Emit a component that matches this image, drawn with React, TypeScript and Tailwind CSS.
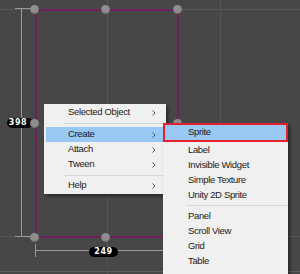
import React from "react";

const font = { fontFamily: '"Liberation Sans", Arial, sans-serif' };
const digits = { fontFamily: '"DejaVu Sans", sans-serif' };

const Chevron = () => (
  <svg width="4" height="6" viewBox="0 0 4 6" className="shrink-0">
    <polyline points="0.5,0.5 3,3 0.5,5.5" fill="none" stroke="#555" strokeWidth="1" />
  </svg>
);

// resize handle on the canvas, placed by its centre
const Handle = ({ x, y }: { x: number; y: number }) => (
  <div
    className="absolute w-[9px] h-[9px] rounded-full bg-[#8e8e8e] shadow-[inset_0_-1px_1px_rgba(0,0,0,0.25)]"
    style={{ left: x - 4.5, top: y - 4.5 }}
  />
);

const MenuRow = ({
  label,
  arrow,
  active,
}: {
  label: string;
  arrow?: boolean;
  active?: boolean;
}) => (
  <div
    className={`h-[15px] flex items-center pl-[22px] pr-[8px] mx-[2px] ${
      active ? "bg-[#98c8f3]" : ""
    }`}
  >
    <span className="flex-1 text-[9.5px] tracking-[-0.35px] text-[#1a1a1a]">{label}</span>
    {arrow && <Chevron />}
  </div>
);

const SubRow = ({ label }: { label: string }) => (
  <div className="h-[15.25px] flex items-center pl-[25px]">
    <span className="text-[9.5px] tracking-[-0.35px] text-[#1a1a1a]">{label}</span>
  </div>
);

const Sep = ({ h, left }: { h: string; left: string }) => (
  <div className={`${h} flex items-center ${left}`}>
    <div className="h-px w-full bg-[#d6d6d6]" />
  </div>
);

export default function App() {
  const handles = [
    [34, 9],
    [105, 9],
    [177, 9],
    [177, 123],
    [34, 237],
    [105, 237],
    [177, 237],
  ];

  return (
    <div className="relative w-[300px] h-[274px] overflow-hidden bg-[#474747]" style={font}>
      {/* grid */}
      <div className="absolute left-0 right-0 top-[9px] h-px bg-[#575757]" />
      <div className="absolute left-0 right-0 top-[236px] h-px bg-[#575757]" />
      <div className="absolute left-0 right-0 top-[271px] h-px bg-[#5e5e5e]" />
      <div className="absolute top-0 bottom-0 left-[107px] w-px bg-[#545454]" />
      <div className="absolute top-0 bottom-0 left-[220px] w-px bg-[#545454]" />

      {/* widget rect */}
      <div className="absolute left-[35px] top-[9px] w-[144px] h-[229px] border-2 border-[#6e1f5c]" />

      {/* left measure */}
      <div className="absolute left-[15px] top-[8px] w-[18px] h-[229px] flex">
        <div className="w-[6px] flex flex-col justify-between">
          <div className="h-px bg-[#9a9a9a]" />
          <div className="h-px bg-[#9a9a9a]" />
        </div>
        <div className="w-px bg-[#9a9a9a]" />
        <div className="flex-1 flex flex-col justify-between">
          <div className="h-px bg-[#9a9a9a]" />
          <div className="h-px bg-[#9a9a9a]" />
        </div>
      </div>

      {/* bottom measure */}
      <div className="absolute left-[35px] top-[244px] w-[143px] h-[13px] flex items-center">
        <div className="w-px h-full bg-[#9a9a9a]" />
        <div className="flex-1 h-px bg-[#9a9a9a]" />
      </div>

      {handles.map(([x, y]) => (
        <Handle key={`${x}-${y}`} x={x} y={y} />
      ))}

      {/* size labels */}
      <div className="absolute left-[7px] top-[118px] w-[26px] h-[10px] rounded-full bg-black flex items-center justify-center pr-[4px]">
        <span className="text-[8px] font-bold text-white leading-none tracking-[0.6px]" style={digits}>
          398
        </span>
      </div>
      <Handle x={34} y={123} />
      <div className="absolute left-[89px] top-[247px] w-[29px] h-[10px] rounded-full bg-black flex items-center justify-center">
        <span className="text-[8px] font-bold text-white leading-none tracking-[0.6px]" style={digits}>
          249
        </span>
      </div>

      {/* context menu */}
      <div className="absolute left-[44px] top-[104px] w-[122px] bg-[#f0f0f0] py-[1px] shadow-[2px_2px_3px_rgba(0,0,0,0.45)]">
        <MenuRow label="Selected Object" arrow />
        <Sep h="h-[7px]" left="pl-[21px]" />
        <MenuRow label="Create" arrow active />
        <MenuRow label="Attach" arrow />
        <MenuRow label="Tween" arrow />
        <Sep h="h-[6px]" left="pl-[21px]" />
        <MenuRow label="Help" arrow />
      </div>

      {/* Create submenu */}
      <div className="absolute left-[163px] top-[123px] w-[125px] h-[170px] bg-[#f0f0f0] shadow-[2px_2px_3px_rgba(0,0,0,0.45)]">
        <div className="h-[19px] flex items-center pl-[23px] border-2 border-[#e3202b] bg-[#98c8f3]">
          <span className="text-[9.5px] tracking-[-0.35px] text-[#1a1a1a]">Sprite</span>
        </div>
        <SubRow label="Label" />
        <SubRow label="Invisible Widget" />
        <SubRow label="Simple Texture" />
        <SubRow label="Unity 2D Sprite" />
        <Sep h="h-[5px]" left="pl-[23px]" />
        <SubRow label="Panel" />
        <SubRow label="Scroll View" />
        <SubRow label="Grid" />
        <SubRow label="Table" />
      </div>
    </div>
  );
}
